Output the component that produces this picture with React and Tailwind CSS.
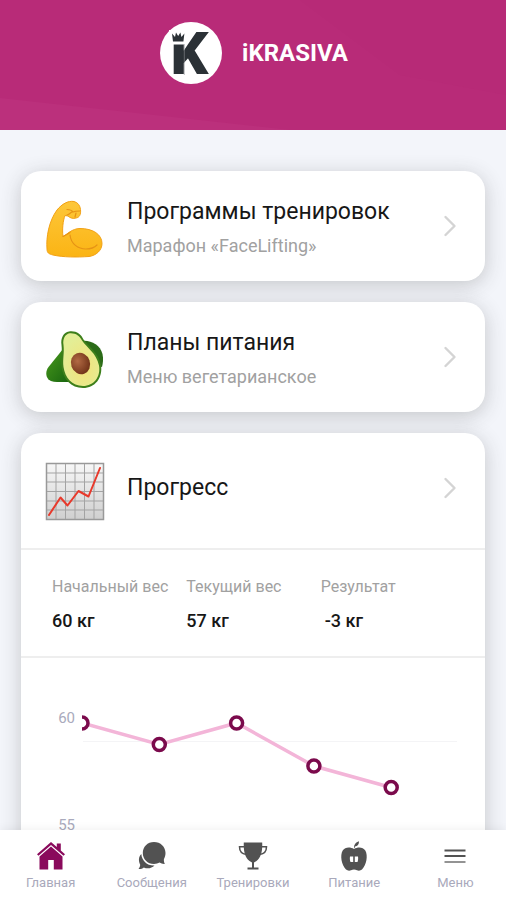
import { ChevronRight } from 'lucide-react';

const weights = [60, 59, 60, 58, 57];

const stats = [
  { label: 'Начальный вес', value: '60 кг' },
  { label: 'Текущий вес', value: '57 кг' },
  { label: 'Результат', value: '-3 кг', indent: true },
];

function Logo() {
  return (
    <svg viewBox="0 0 62 62" className="h-[62px] w-[62px] overflow-visible" role="img" aria-label="iK">
      <circle cx="31" cy="31" r="31" fill="#fff" />
      <text x="10.500" y="52" fontSize="59" fontWeight="900" fontFamily="Roboto, sans-serif" fill="#2b3136">K</text>
      <rect x="9" y="8" width="16" height="14.500" fill="#fff" />
      <path d="M24.300 22v31" stroke="#8d9194" strokeWidth="0.600" />
      <path d="M13 19.500 12 11.500l3 3.500 1-4.500 2.200 3.500 2.200-3.500 1 4.500 3-3.500-1 8z" fill="#2b3136" />
    </svg>
  );
}

function MuscleIcon() {
  return (
    <svg viewBox="0 0 60 60" className="h-[60px] w-[60px]" aria-hidden="true">
      <defs>
        <linearGradient id="skin" x1="0" y1="0" x2="0" y2="1">
          <stop offset="0" stopColor="#fdc73a" />
          <stop offset="1" stopColor="#fbb414" />
        </linearGradient>
      </defs>
      <path
        d="M2 50C1 38 4 22 12 11 17 5 23 1.500 29 2.500c4 1 6 4 6.500 8 .5 5-1 8-4.500 8.500-3 1-6 0-8-2l-3-.5c-2 5-3 14-2 21 4-2 9-8 17-8 13 0 22 6 22 15 0 7-6 12-13 13-12 .8-26 .8-36-1.500-4-1-6-2-6-6z"
        fill="url(#skin)" stroke="#f2a114" strokeWidth="1"
      />
      <path
        d="M18 37.500c2-1 5-2.500 7-4M25 36c1 9 8 14 16 14 5 0 9-2 11-4M22 10.500c3 0 5 1 6 2.500 2-1 4-1 7-1M27 13c-2 1-3 2.500-5 3M30 18l1-4"
        fill="none" stroke="#e69315" strokeWidth="1.200" strokeLinecap="round"
      />
    </svg>
  );
}

function AvocadoIcon() {
  return (
    <svg viewBox="0 0 60 60" className="h-[60px] w-[60px]" aria-hidden="true">
      <defs>
        <linearGradient id="peel" x1="0" y1="0" x2="1" y2="1">
          <stop offset="0" stopColor="#4a9a1c" />
          <stop offset="1" stopColor="#16630f" />
        </linearGradient>
        <radialGradient id="flesh" cx="0.55" cy="0.65" r="0.6">
          <stop offset="0" stopColor="#f3e27a" />
          <stop offset="1" stopColor="#e3ee96" />
        </radialGradient>
        <radialGradient id="pit" cx="0.4" cy="0.35" r="0.7">
          <stop offset="0" stopColor="#b26a44" />
          <stop offset="1" stopColor="#6e3016" />
        </radialGradient>
      </defs>
      <path d="M37 11c9-1 18 4 20.500 13 1 5 .5 9-.5 13L44 34z" fill="#2b6b18" />
      <path d="M18 19 3.500 37c-3 4-3 9 0 12.500 3 2.500 7 2.500 12 2.500h11z" fill="url(#peel)" />
      <path
        d="M24 1.500c7-1 12 2.500 14.500 8C44 17 53 22 56 35c2 13-6 23-18 23-12 0-20-9-21.500-21-1-8 1-14 0-22-1-7 2-12.500 7.500-13.500z"
        fill="#3d7f1b"
      />
      <path
        d="M24.500 3.200c6-.5 10 2.300 12.500 7.300C42 18 51.500 23 54 35.500c2 11-5 20.500-16 20.500-11 0-18-8.500-19.500-19-1-8 1-14 0-22-1-6 1.500-10.800 6-11.800z"
        fill="url(#flesh)"
      />
      <ellipse cx="35.500" cy="33.500" rx="9.500" ry="10.800" fill="url(#pit)" transform="rotate(-20 35.500 33.500)" />
    </svg>
  );
}

function GrowthIcon() {
  return (
    <svg viewBox="0 0 60 60" className="h-[60px] w-[60px]" aria-hidden="true">
      <defs>
        <linearGradient id="sheet" x1="0" y1="0" x2="0" y2="1">
          <stop offset="0" stopColor="#f7f7f7" />
          <stop offset="1" stopColor="#cfcfcf" />
        </linearGradient>
      </defs>
      <rect x="1.500" y="2.500" width="57" height="56" fill="url(#sheet)" stroke="#999" strokeWidth="1.500" />
      <path
        d="M11 3v55M20.500 3v55M30 3v55M39.500 3v55M49 3v55M2 12h56M2 21h56M2 30.500h56M2 40h56M2 49h56"
        stroke="#a3a3a3" strokeWidth="1"
      />
      <path d="M4 54 15.500 36.500l7 8L33.500 30l10 5.500L55 7" fill="none" stroke="#e8392b" strokeWidth="2" strokeLinecap="round" strokeLinejoin="round" />
    </svg>
  );
}

function HomeIcon() {
  return (
    <svg viewBox="0 0 30 30" className="h-[30px] w-[30px]" fill="currentColor" aria-hidden="true">
      <path d="M15 1 1 13.200l1.500 1.600L15 4l12.500 10.800 1.500-1.600-4.200-3.700V2.500h-4v3.600z" />
      <path d="M15 5.500 3.500 15.400V28.500h8.700V19h5.600v9.500h8.700V15.400z" />
    </svg>
  );
}

function ChatIcon() {
  return (
    <svg viewBox="0 0 30 30" className="h-[30px] w-[30px]" fill="currentColor" aria-hidden="true">
      <path d="M17 1C10.500 1 5.800 5.800 5.800 12S10.500 23 17 23c2.200 0 4-.5 5.600-1.400 1.400 1 3 1.400 5.200 1.300-.8-1.500-1-3-.9-4.700 1-1.800 1.600-3.900 1.600-6.200C28.500 5.800 23.500 1 17 1z" />
      <path d="M4.300 13C2.300 15 1.700 17.500 2 20c.2 1.500.6 2.700 1.200 3.800-.1 1.700-.7 3.100-1.700 4.200 2.100.2 3.900-.4 5.300-1.500 3.700 1.600 7.900.9 10.700-2C10.500 25 4.800 20 4.300 13z" />
    </svg>
  );
}

function TrophyIcon() {
  return (
    <svg viewBox="0 0 30 30" className="h-[30px] w-[30px]" fill="currentColor" aria-hidden="true">
      <path d="M5.800 1.500h18.400c.4 8.500-1.200 15-5.700 18.500l-2.500 1.500v5h4.500v2h-11v-2H14v-5L11.500 20C7 16.500 5.400 10 5.800 1.500z" />
      <path d="M6 5.800H1.500c0 4.700 2.500 7.200 6.800 7.700M24 5.800h4.500c0 4.700-2.500 7.200-6.800 7.700" fill="none" stroke="currentColor" strokeWidth="1.500" />
    </svg>
  );
}

function AppleIcon() {
  return (
    <svg viewBox="0 0 30 30" className="h-[30px] w-[30px]" fill="currentColor" aria-hidden="true">
      <path d="M15 8C11 5.600 6 6 3.700 9.500 .8 14.500 2.500 24 7 28.500c1.500 1.300 3.500 1.400 5 .7 2-.8 4-.8 6 0 1.500.7 3.500.6 5-.7 4.500-4.500 6.200-14 3.300-19C24 6 19 5.600 15 8z" />
      <path d="M15 6.500c0-2.800 1.500-5.100 5-6.300.2 3-1.500 5-4 5.300l-.3 1.800z" />
      <path d="M11 15.500h3.200v5.500h-2.700c-.7-1.800-.8-3.600-.5-5.500zM15.800 15.500H19c.3 1.900.2 3.700-.5 5.500h-2.700z" fill="#fff" />
    </svg>
  );
}

function MenuIcon() {
  return (
    <svg viewBox="0 0 30 30" className="h-[30px] w-[30px]" stroke="currentColor" strokeWidth="1.800" aria-hidden="true">
      <path d="M4.500 9.500h21M4.500 15h21" />
      <path d="M4.500 21h21" strokeOpacity="0.700" />
    </svg>
  );
}

const tabs = [
  { label: 'Главная', Icon: HomeIcon, active: true },
  { label: 'Сообщения', Icon: ChatIcon },
  { label: 'Тренировки', Icon: TrophyIcon },
  { label: 'Питание', Icon: AppleIcon },
  { label: 'Меню', Icon: MenuIcon },
];

function CardLink({ Icon, title, subtitle }) {
  return (
    <a href="#" className="flex h-[110px] items-center pr-[17px] pl-6">
      <span className="shrink-0 pt-1.5"><Icon /></span>
      <span className={`ml-[22px] flex min-w-0 flex-1 flex-col gap-1 ${subtitle ? 'pt-1' : ''}`}>
        <span className="text-[23px] leading-8 text-neutral-900">{title}</span>
        {subtitle && <span className="text-lg text-neutral-400">{subtitle}</span>}
      </span>
      <ChevronRight className="shrink-0 text-neutral-300" size={36} strokeWidth={1.6} />
    </a>
  );
}

function WeightChart() {
  // 21.5 units of height per kilogram
  const points = weights.map((w, i) => [61 + i * 77.3, 64 + (60 - w) * 21.5]);

  return (
    <svg viewBox="0 0 464 240" className="block w-full" role="img" aria-label="График веса">
      <defs>
        <clipPath id="plot"><rect x="61" y="0" width="376" height="240" /></clipPath>
      </defs>
      <g fontFamily="Roboto, sans-serif" fontSize="15" fill="#a9aabc" textAnchor="end">
        <text x="54" y="64">60</text>
        <text x="54" y="171">55</text>
      </g>
      <path d="M62 82.500h374M62 189.500h374" stroke="#f4f4f6" strokeWidth="1" />
      <g clipPath="url(#plot)">
        <polyline points={points.map((p) => p.join(',')).join(' ')} fill="none" stroke="#f3b5d8" strokeWidth="3.500" />
        {points.map(([x, y]) => (
          <circle key={x} cx={x} cy={y} r="6" fill="#fff" stroke="#7b0a4c" strokeWidth="3.500" />
        ))}
      </g>
    </svg>
  );
}

export default function App() {
  return (
    <div className="flex h-screen flex-col bg-[#f3f5fa] font-['Roboto','Noto_Sans',sans-serif]">
      {/* Header */}
      <header className="relative flex h-[130px] shrink-0 items-center justify-center gap-5 bg-[#b82b78] pb-6 pl-0.5">
        <svg viewBox="0 0 506 130" preserveAspectRatio="none" className="absolute inset-0 h-full w-full" aria-hidden="true">
          <path d="M0 98 290 130H0z" fill="#bb307c" />
          <path d="M300 0h206v95L400 75z" fill="#b72a77" />
        </svg>
        <span className="relative"><Logo /></span>
        <h1 className="relative text-2xl font-bold text-white">iKRASIVA</h1>
      </header>

      {/* Cards */}
      <main className="flex min-h-0 flex-1 flex-col gap-[21px] overflow-y-auto px-[21px] pt-[41px] [scrollbar-width:none]">
        <section className="shrink-0 rounded-[20px] bg-white shadow-[0_4px_20px_rgba(50,50,50,0.24)]">
          <CardLink Icon={MuscleIcon} title="Программы тренировок" subtitle="Марафон «FaceLifting»" />
        </section>
        <section className="shrink-0 rounded-[20px] bg-white shadow-[0_4px_20px_rgba(50,50,50,0.24)]">
          <CardLink Icon={AvocadoIcon} title="Планы питания" subtitle="Меню вегетарианское" />
        </section>
        <section className="shrink-0 rounded-[20px] bg-white shadow-[0_4px_20px_rgba(50,50,50,0.24)]">
          <CardLink Icon={GrowthIcon} title="Прогресс" />
          <dl className="mt-[5px] grid h-[108px] grid-cols-3 border-t-2 border-[#eeeeee] pt-[25px] pr-[30px] pl-[31px]">
            {stats.map((s) => (
              <div key={s.label}>
                <dt className="text-base whitespace-nowrap text-neutral-400">{s.label}</dt>
                <dd className={`mt-2 text-lg leading-7 font-medium text-neutral-900 ${s.indent ? 'pl-1' : ''}`}>{s.value}</dd>
              </div>
            ))}
          </dl>
          <div className="border-t-2 border-[#eeeeee] pt-px">
            <WeightChart />
          </div>
        </section>
      </main>

      {/* Bottom tabs */}
      <nav className="relative grid h-[70px] shrink-0 grid-cols-5 bg-white shadow-[0_-2px_8px_rgba(0,0,0,0.05)]">
        {tabs.map(({ label, Icon, active }) => (
          <a key={label} href="#" className="flex flex-col items-center gap-0.5 pt-[11px]">
            <span className={active ? 'text-[#8a0a5c]' : 'text-neutral-600'}><Icon /></span>
            <span className="text-[13px] leading-5 text-[#a9a9bb]">{label}</span>
          </a>
        ))}
      </nav>
    </div>
  );
}
